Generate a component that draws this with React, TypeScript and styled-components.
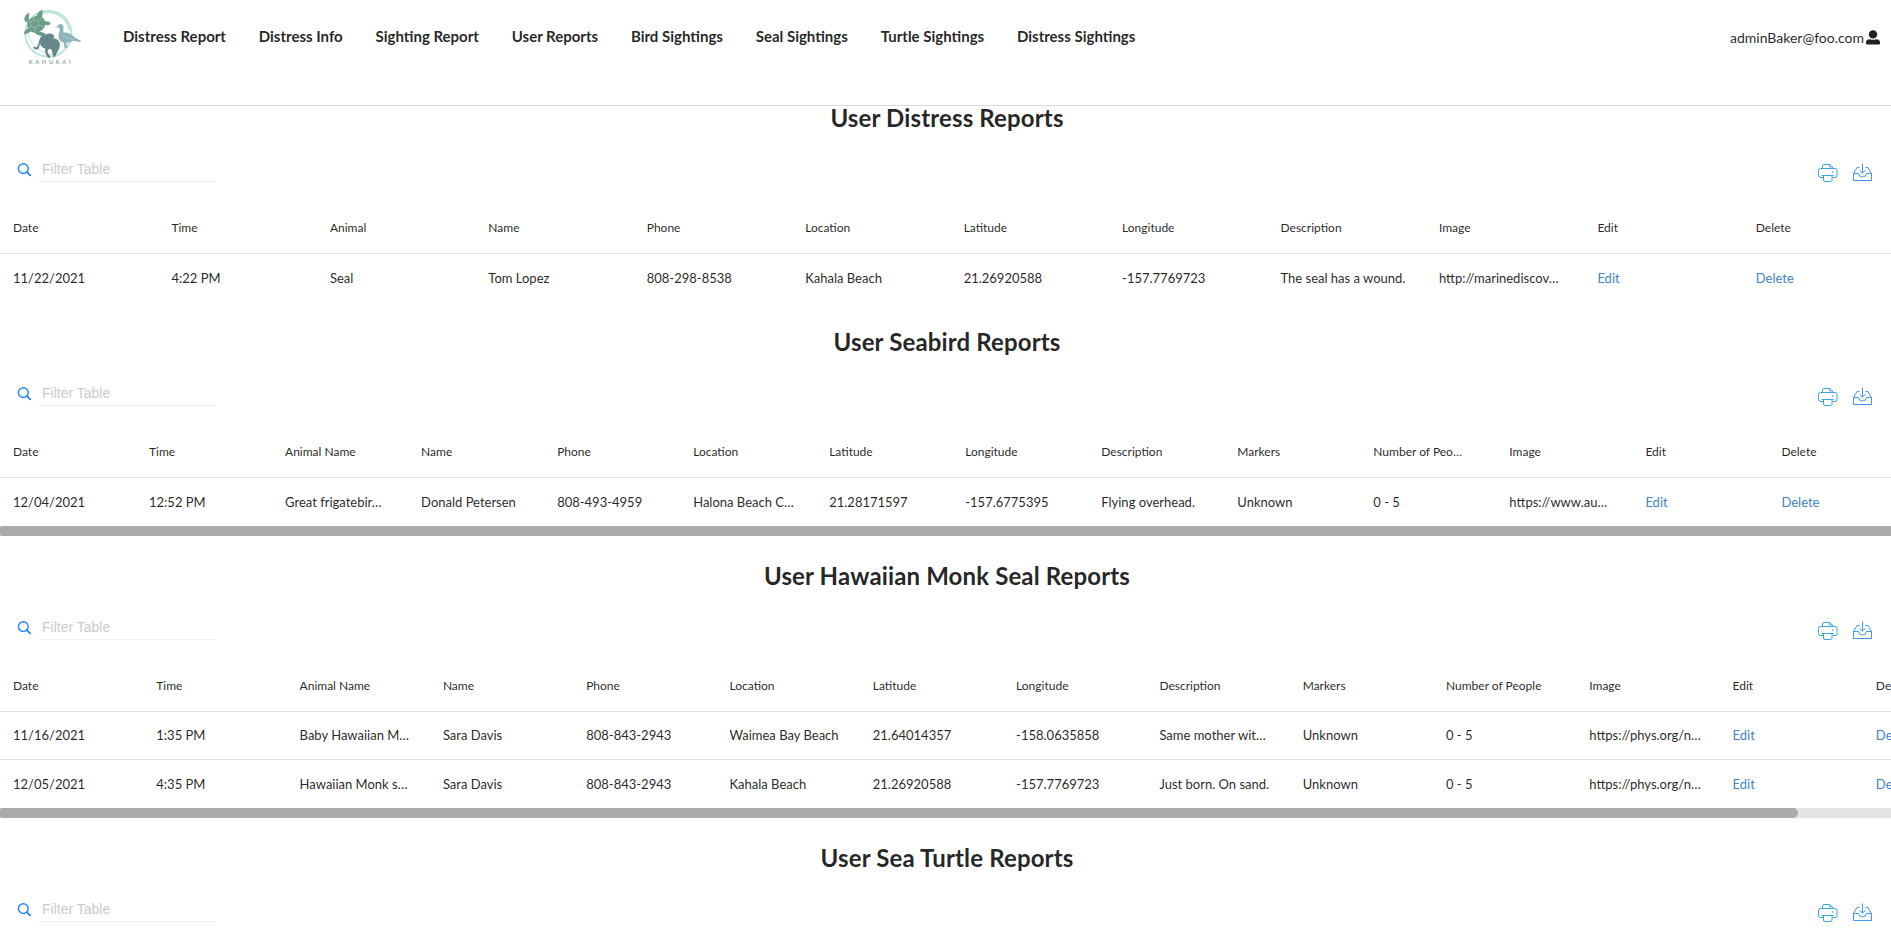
import React from "react";
import styled, { createGlobalStyle } from "styled-components";

const GlobalStyle = createGlobalStyle`
  *, *::before, *::after { box-sizing: border-box; }
  html, body { margin: 0; padding: 0; background: #fff; overflow: hidden; }
  body { font-family: Lato, "Liberation Sans", sans-serif; font-size: 14px; color: rgba(0, 0, 0, 0.87); }
`;

const Page = styled.div`
  width: 100%;
  height: 938px;
  overflow: hidden;
`;

const Header = styled.header`
  display: flex;
  justify-content: space-between;
  height: 106px;
  padding: 0 11px 0 10px;
  border-bottom: 1px solid #d9dadb;
`;

const HeaderLeft = styled.div`
  display: flex;
`;

const Logo = styled.svg`
  display: block;
  width: 80px;
  height: 75px;
  margin-right: 33px;
`;

const Nav = styled.nav`
  display: flex;
  gap: 32.8px;
  height: 71px;
  align-items: center;
`;

const NavLink = styled.a`
  font-size: 15px;
  font-weight: 700;
  line-height: 20px;
  white-space: nowrap;
`;

const UserMenu = styled.div`
  display: flex;
  align-items: center;
  gap: 2px;
  height: 75px;
  font-size: 14px;
  line-height: 19px;
`;

const UserIcon = styled.svg`
  display: block;
  width: 14px;
  height: 15px;
`;

const Section = styled.section`
  margin-bottom: 28px;
`;

const Title = styled.h2`
  margin: 0 0 -6px;
  padding-left: 3px;
  height: 30px;
  font-size: 24px;
  line-height: 24px;
  letter-spacing: 0.14px;
  font-weight: 700;
  text-align: center;
`;

const Toolbar = styled.div`
  display: flex;
  justify-content: space-between;
  height: 72px;
  padding: 25px 18px 0 17px;
`;

const Filter = styled.div`
  display: flex;
  align-items: flex-start;
  gap: 7px;
`;

const SearchIcon = styled.svg`
  display: block;
  width: 14px;
  height: 14px;
  margin-top: 8px;
`;

const FilterInput = styled.input`
  width: 178px;
  height: 27px;
  padding: 1px 4px 0;
  border: 0;
  border-bottom: 1px solid #f0f0f0;
  outline: 0;
  background: transparent;
  font-family: "Liberation Sans", sans-serif;
  font-size: 14px;
  &::placeholder { color: #cacaca; opacity: 1; }
`;

const Actions = styled.div`
  display: flex;
  align-items: flex-start;
  gap: 14px;
  padding-top: 8px;
`;

const ActionIcon = styled.svg`
  display: block;
  width: 21px;
  height: 20px;
  fill: none;
`;

const Row = styled.div<{ $col: number; $head?: boolean }>`
  display: grid;
  grid-auto-flow: column;
  grid-auto-columns: ${(p) => p.$col}px;
  align-items: center;
  height: ${(p) => (p.$head ? 52 : 48)}px;
  padding-bottom: ${(p) => (p.$head ? 0 : 1)}px;
  font-size: ${(p) => (p.$head ? 12 : 13)}px;
  border-bottom: 1px solid #dfdfdf;
  &:last-child { border-bottom-color: transparent; padding-bottom: 0; }
`;

const Cell = styled.div<{ $link?: boolean }>`
  padding: 0 13px;
  line-height: 20px;
  white-space: nowrap;
  overflow: hidden;
  text-overflow: ellipsis;
  color: ${(p) => (p.$link ? "#4183c4" : "inherit")};
`;

const Table = styled.div`
  overflow: hidden;
`;

const ScrollTrack = styled.div`
  height: 10px;
  overflow: hidden;
  background: #e4e4e4;
`;

const ScrollThumb = styled.div<{ $width: number }>`
  width: ${(p) => p.$width}px;
  height: 10px;
  border-radius: 2px 5px 5px 2px;
  background: #aaa;
`;

const links = [
  "Distress Report",
  "Distress Info",
  "Sighting Report",
  "User Reports",
  "Bird Sightings",
  "Seal Sightings",
  "Turtle Sightings",
  "Distress Sightings",
];

type Report = { title: string; col: number; thumb?: number; head: string[]; rows: string[][] };

const reports: Report[] = [
  {
    title: "User Distress Reports",
    col: 158.45,
    head: ["Date", "Time", "Animal", "Name", "Phone", "Location", "Latitude", "Longitude", "Description", "Image", "Edit", "Delete"],
    rows: [
      ["11/22/2021", "4:22 PM", "Seal", "Tom Lopez", "808-298-8538", "Kahala Beach", "21.26920588", "-157.7769723", "The seal has a wound.", "http://marinediscov…", "Edit", "Delete"],
    ],
  },
  {
    title: "User Seabird Reports",
    col: 136.04,
    thumb: 1898,
    head: ["Date", "Time", "Animal Name", "Name", "Phone", "Location", "Latitude", "Longitude", "Description", "Markers", "Number of Peo…", "Image", "Edit", "Delete"],
    rows: [
      ["12/04/2021", "12:52 PM", "Great frigatebir…", "Donald Petersen", "808-493-4959", "Halona Beach C…", "21.28171597", "-157.6775395", "Flying overhead.", "Unknown", "0 - 5", "https://www.au…", "Edit", "Delete"],
    ],
  },
  {
    title: "User Hawaiian Monk Seal Reports",
    col: 143.3,
    thumb: 1798,
    head: ["Date", "Time", "Animal Name", "Name", "Phone", "Location", "Latitude", "Longitude", "Description", "Markers", "Number of People", "Image", "Edit", "Delete"],
    rows: [
      ["11/16/2021", "1:35 PM", "Baby Hawaiian M…", "Sara Davis", "808-843-2943", "Waimea Bay Beach", "21.64014357", "-158.0635858", "Same mother wit…", "Unknown", "0 - 5", "https://phys.org/n…", "Edit", "Delete"],
      ["12/05/2021", "4:35 PM", "Hawaiian Monk s…", "Sara Davis", "808-843-2943", "Kahala Beach", "21.26920588", "-157.7769723", "Just born. On sand.", "Unknown", "0 - 5", "https://phys.org/n…", "Edit", "Delete"],
    ],
  },
  { title: "User Sea Turtle Reports", col: 143.3, head: [], rows: [] },
];

const KahukaiLogo = () => (
  <Logo viewBox="0 0 240 225">
    <circle cx="115" cy="101" r="69" fill="none" stroke="#bce5da" strokeWidth="6" />
    <path d="M96 41 C130 28 172 50 178 92" fill="none" stroke="#bce5da" strokeWidth="5" />
    <path d="M52 94 C60 132 84 158 122 162" fill="none" stroke="#bce5da" strokeWidth="3" />
    {/* turtle */}
    <g fill="#6b9c88">
      <ellipse cx="79" cy="73" rx="28" ry="24" transform="rotate(-28 79 73)" />
      <path d="M54 68 C38 66 40 46 57 38 C60 46 52 54 61 62 Z" />
      <path d="M80 50 C82 38 90 30 99 31 C95 38 101 48 92 56 Z" />
      <path d="M101 68 C106 60 121 65 122 71 C115 78 104 76 101 72 Z" />
      <path d="M58 84 C50 86 41 94 42 103 C52 102 60 97 65 91 Z" />
      <path d="M78 94 C92 96 104 97 108 104 C99 113 82 107 73 97 Z" />
    </g>
    <g fill="none" stroke="#b4d3c5" strokeWidth="1.8">
      <path d="M60 67 L72 60 L84 64 L86 76 L74 84 L63 79 Z" />
      <path d="M72 60 L70 51 M84 64 L94 54 M86 76 L100 79 M74 84 L76 95 M63 79 L54 85 M60 67 L53 64" />
    </g>
    {/* seabird */}
    <path
      fill="#8db5b8"
      d="M135 81 L144 78 C145 70 157 69 160 79 C162 88 157 94 162 98 C174 96 187 105 196 113 L213 122 L211 126 L190 122 C181 128 174 126 169 128 L172 143 L163 144 L162 128 C149 126 142 112 147 98 C151 90 150 85 147 83 Z"
    />
    <path d="M157 106 C169 112 177 116 190 118" fill="none" stroke="#b9d3d3" strokeWidth="2" />
    {/* monk seal */}
    <path
      fill="#66888c"
      d="M89 118 C90 110 98 106 106 106 C112 98 128 99 132 107 L132 113 L124 115 C142 112 153 126 149 140 C146 151 141 155 137 167 L131 173 L127 161 L126 150 L119 146 C108 151 114 164 122 168 L117 175 C108 168 103 154 106 146 C97 143 91 137 90 130 L87 145 C80 151 71 149 69 141 L80 142 C85 136 86 126 89 118 Z"
    />
    <text x="56" y="193" textLength="126" fill="#8f9c9c" fontFamily="Lato, sans-serif" fontSize="17" fontWeight="700">
      KAHUKAI
    </text>
  </Logo>
);

const App = () => (
  <Page>
    <GlobalStyle />
    <Header>
      <HeaderLeft>
        <KahukaiLogo />
        <Nav>
          {links.map((l) => (
            <NavLink key={l}>{l}</NavLink>
          ))}
        </Nav>
      </HeaderLeft>
      <UserMenu>
        <span>adminBaker@foo.com</span>
        <UserIcon viewBox="0 0 14 15" fill="#212121">
          <circle cx="7" cy="4.4" r="4.2" />
          <path d="M0 12.5 C0 10 1.5 9.2 4 9.2 C6 10 8 10 10 9.2 C12.5 9.2 14 10 14 12.5 V13.5 Q14 14.5 13 14.5 H1 Q0 14.5 0 13.5 Z" />
        </UserIcon>
      </UserMenu>
    </Header>
    {reports.map((r) => (
      <Section key={r.title}>
        <Title>{r.title}</Title>
        <Toolbar>
          <Filter>
            <SearchIcon viewBox="0 0 14 14" fill="none" stroke="#1f86f5" strokeLinecap="round">
              <circle cx="6.3" cy="5.6" r="4.9" strokeWidth="1.4" />
              <path d="M9.9 9.2 L13.1 12.4" strokeWidth="1.8" />
            </SearchIcon>
            <FilterInput placeholder="Filter Table" />
          </Filter>
          <Actions>
            <ActionIcon viewBox="0 0 21 20" stroke="#3aa5e2">
              <path d="M5.5 5 V3 Q5.5 1.5 7 1.5 H12.5 L15.5 4 V5" />
              <path d="M12.5 1.5 V4 H15.5" strokeWidth="0.8" />
              <path d="M6 14.5 H3.5 Q1.5 14.5 1.5 12.5 V7.5 Q1.5 5.5 3.5 5.5 H18 Q20 5.5 20 7.5 V12.5 Q20 14.5 18 14.5 H15.5" />
              <path d="M4.5 12.5 H16.5 M6.5 12.5 V17 Q6.5 18.5 8 18.5 H13.5 Q15 18.5 15 17 V12.5" />
              <circle cx="15.5" cy="9" r="0.5" />
            </ActionIcon>
            <ActionIcon viewBox="0 0 21 20" stroke="#3d97f7">
              <path d="M7.5 4.5 H5 L1.5 10.5 V17.5 H19.5 V10.5 L16 4.5 H13.5" />
              <path d="M1.5 10.5 H6.5 Q7 14 10.5 14 Q14 14 14.5 10.5 H19.5" />
              <path d="M10.5 0.5 V10 M7.5 7.2 L10.5 10 L13.5 7.2" />
            </ActionIcon>
          </Actions>
        </Toolbar>
        {r.head.length > 0 && (
          <Table>
            <Row $col={r.col} $head>
              {r.head.map((h) => (
                <Cell key={h}>{h}</Cell>
              ))}
            </Row>
            {r.rows.map((row) => (
              <Row $col={r.col} key={row[0]}>
                {row.map((c, i) => (
                  <Cell key={i} $link={i >= row.length - 2}>
                    {c}
                  </Cell>
                ))}
              </Row>
            ))}
          </Table>
        )}
        {r.thumb && (
          <ScrollTrack>
            <ScrollThumb $width={r.thumb} />
          </ScrollTrack>
        )}
      </Section>
    ))}
  </Page>
);

export default App;
